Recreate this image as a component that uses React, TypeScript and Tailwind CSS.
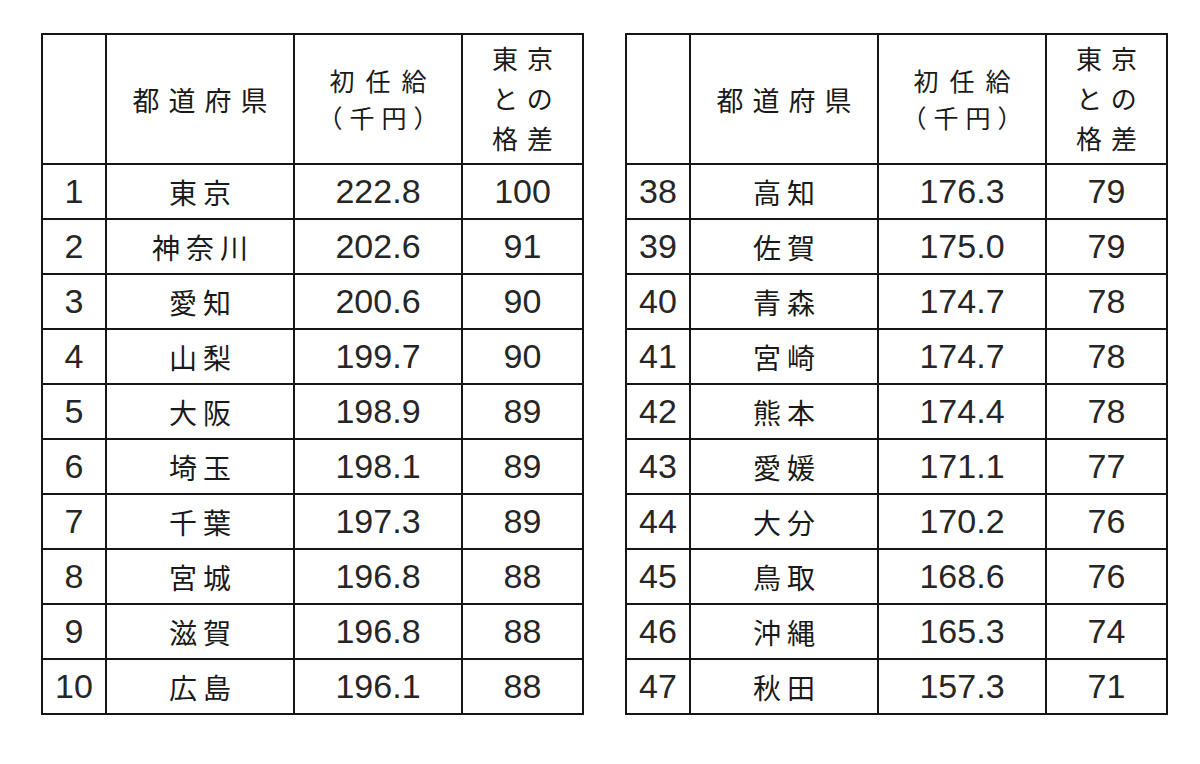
const left = [
  ["1", "東京", "222.8", "100"],
  ["2", "神奈川", "202.6", "91"],
  ["3", "愛知", "200.6", "90"],
  ["4", "山梨", "199.7", "90"],
  ["5", "大阪", "198.9", "89"],
  ["6", "埼玉", "198.1", "89"],
  ["7", "千葉", "197.3", "89"],
  ["8", "宮城", "196.8", "88"],
  ["9", "滋賀", "196.8", "88"],
  ["10", "広島", "196.1", "88"],
];

const right = [
  ["38", "高知", "176.3", "79"],
  ["39", "佐賀", "175.0", "79"],
  ["40", "青森", "174.7", "78"],
  ["41", "宮崎", "174.7", "78"],
  ["42", "熊本", "174.4", "78"],
  ["43", "愛媛", "171.1", "77"],
  ["44", "大分", "170.2", "76"],
  ["45", "鳥取", "168.6", "76"],
  ["46", "沖縄", "165.3", "74"],
  ["47", "秋田", "157.3", "71"],
];

const jpFont = "font-['Noto_Sans_CJK_JP',sans-serif] text-[#1a1a1a] font-normal";
const num = "font-['Liberation_Sans',Arial,sans-serif] text-[34px] text-[#262626]";
const cell = "border-2 border-[#161616] p-0 text-center align-middle";

function RankTable({ rows }: { rows: string[][] }) {
  return (
    <table className="table-fixed border-collapse bg-white">
      <colgroup>
        <col className="w-[64px]" />
        <col className="w-[188px]" />
        <col className="w-[168px]" />
        <col className="w-[121px]" />
      </colgroup>
      <thead>
        <tr className="h-[130px]">
          <th className={cell}></th>
          <th className={`${cell} ${jpFont} text-[27px] tracking-[9px] leading-none`}>
            <span className="pl-[9px]">都道府県</span>
          </th>
          <th className={`${cell} ${jpFont} text-[25px] leading-[37px]`}>
            <div className="tracking-[11px] pl-[11px]">初任給</div>
            <div className="tracking-[7px] pl-[7px]">（千円）</div>
          </th>
          <th className={`${cell} ${jpFont} text-[26px] tracking-[9px] leading-[40px] pb-[2px]`}>
            <div className="pl-[9px]">東京</div>
            <div className="pl-[9px]">との</div>
            <div className="pl-[9px]">格差</div>
          </th>
        </tr>
      </thead>
      <tbody>
        {rows.map((r) => (
          <tr key={r[0]} className="h-[55px]">
            <td className={`${cell} ${num}`}>{r[0]}</td>
            <td className={`${cell} ${jpFont} text-[28px] tracking-[6px]`}>
              <span className="pl-[6px]">{r[1]}</span>
            </td>
            <td className={`${cell} ${num}`}>{r[2]}</td>
            <td className={`${cell} ${num}`}>{r[3]}</td>
          </tr>
        ))}
      </tbody>
    </table>
  );
}

export default function App() {
  return (
    <div className="w-[1200px] h-[764px] bg-white pt-[33px] pl-[41px]">
      <div className="flex items-start gap-[41px]">
        <RankTable rows={left} />
        <RankTable rows={right} />
      </div>
    </div>
  );
}
